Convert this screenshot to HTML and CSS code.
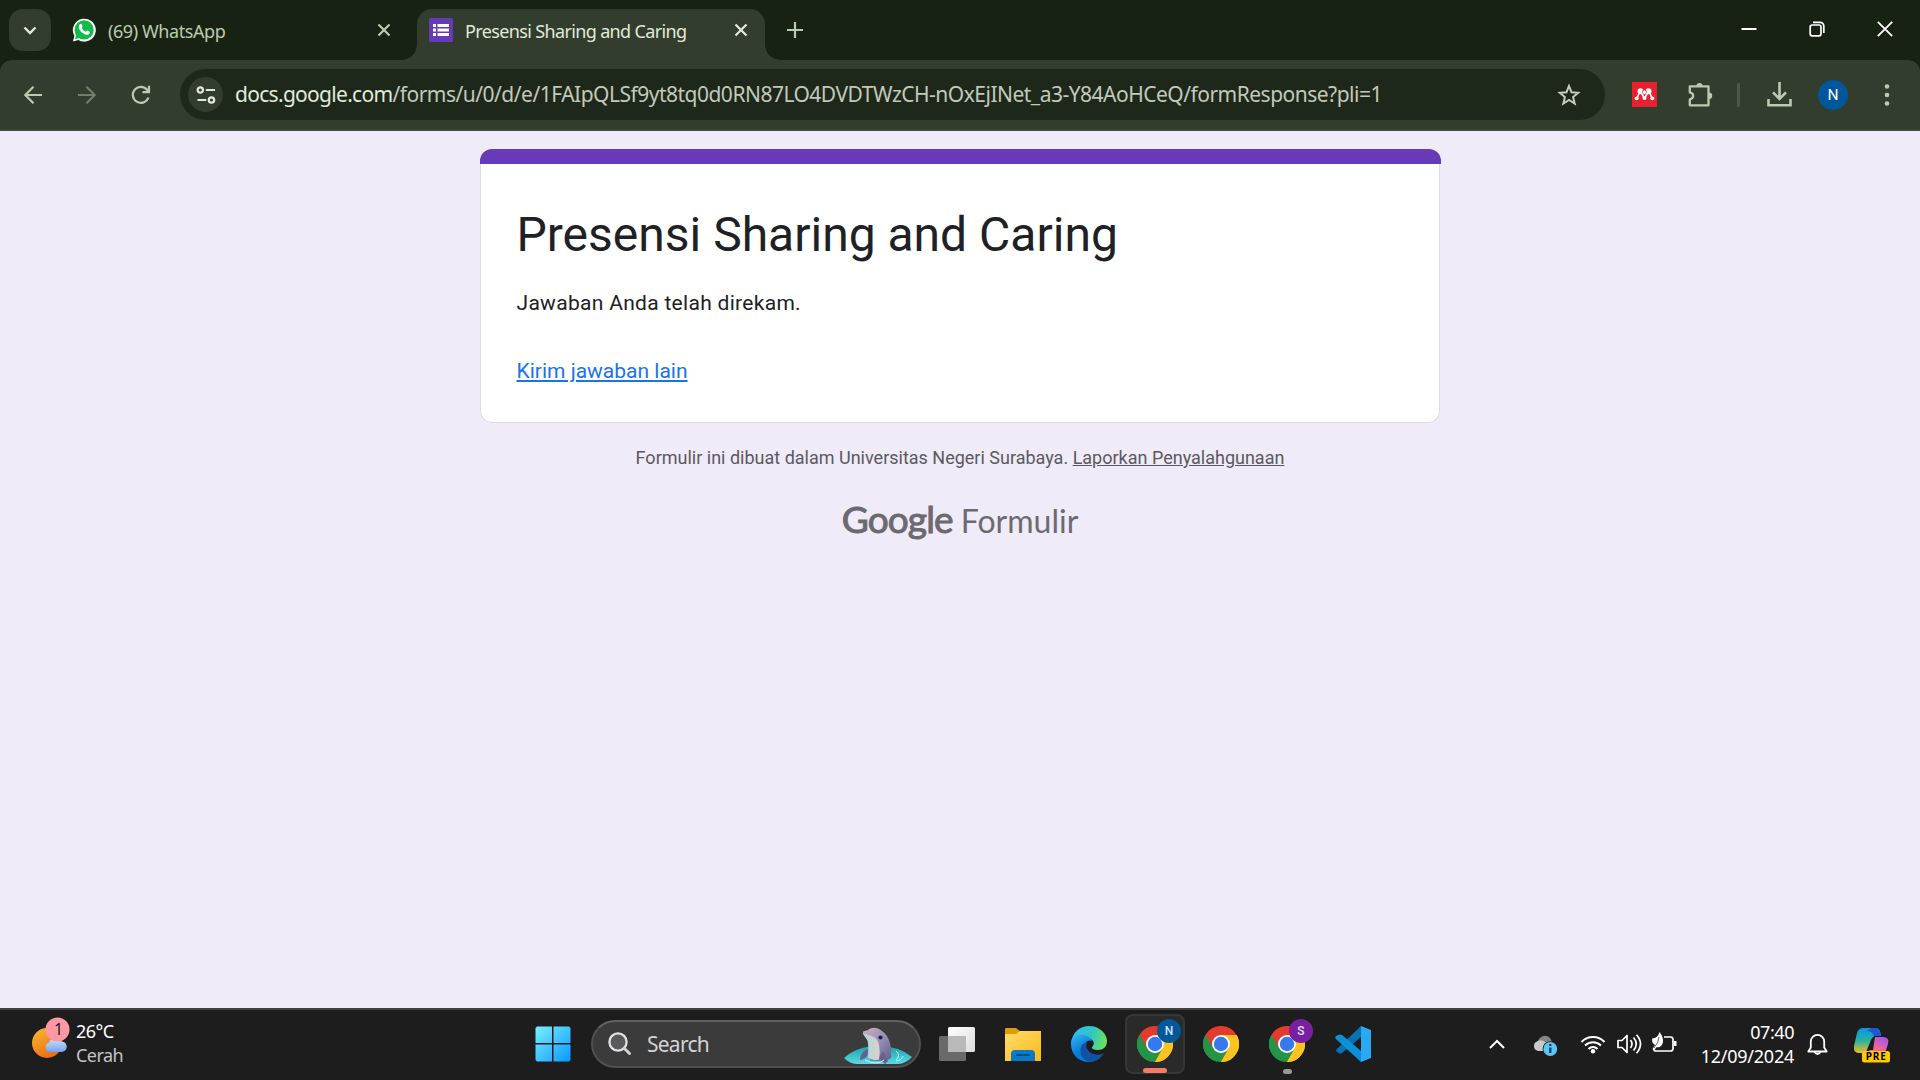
FILE: index.html
```html
<!DOCTYPE html>
<html lang="id">
<head>
<meta charset="utf-8">
<title>Presensi Sharing and Caring</title>
<link rel="stylesheet" href="styles.css">
</head>
<body>
<svg class="defs" width="0" height="0" aria-hidden="true">
  <defs>
    <symbol id="chrome" viewBox="0 0 36 36">
      <path d="M18 18 2.4 9A18 18 0 0 1 33.6 9Z" fill="#e33b2e"/>
      <path d="M18 18 33.6 9A18 18 0 0 1 18 36Z" fill="#fcc31e"/>
      <path d="M18 18 18 36A18 18 0 0 1 2.4 9Z" fill="#249446"/>
      <path d="M18 9H33.6L26 18Z" fill="#fcc31e"/>
      <path d="M10.2 22.5 2.4 9 16 10Z" fill="#e33b2e"/>
      <path d="M10.2 22.5 2.4 9A18 18 0 0 0 14 35.5Z" fill="#249446"/>
      <path d="M25.8 22.5 18 36 16 26Z" fill="#249446"/>
      <path d="M25.8 22.5 18 36A18 18 0 0 0 33.6 9H18Z" fill="#fcc31e"/>
      <circle cx="18" cy="18" r="9" fill="#fff"/>
      <circle cx="18" cy="18" r="7.2" fill="#3779ed"/>
    </symbol>
  </defs>
</svg>
<div class="screen">
  <header class="tabs">
    <button class="tab-search"><svg width="14" height="9" viewBox="0 0 14 9"><path d="M1.5 1.5 7 7l5.500-5.500" fill="none" stroke="#e1ead8" stroke-width="2.400"/></svg></button>
    <div class="tab">
      <svg class="fav" width="24" height="24" viewBox="0 0 24 24"><path d="M1 23.500 2.300 17.800A11.500 11.500 0 1 1 6.400 22Z" fill="#fff"/><circle cx="12.100" cy="11.900" r="9.600" fill="#0fbd4a"/><path d="m3 21.300 1.200-4.500 3.400 3.300Z" fill="#0fbd4a"/><path d="M7.700 6.200c1-.9 1.700-.6 2 .1l.8 1.900c.2.600-.9 1.500-.8 1.800.8 1.700 2.300 3 4 3.800.5.200 1.100-1.300 1.700-1.200l2 1c.9.500.3 2-.5 2.700-1.500 1.200-4.300.3-6.700-1.500-2.500-2-4.600-5.300-2.500-8.600Z" fill="#fff"/></svg>
      <span class="tab-title whatsapp-title">(69) WhatsApp</span>
      <svg class="x" width="14" height="14" viewBox="0 0 14 14"><path d="m1.500 1.500 11 11m0-11-11 11" stroke="#b9ccaf" stroke-width="2.200"/></svg>
    </div>
    <div class="tab active">
      <svg class="fav" width="24" height="24" viewBox="0 0 24 24"><rect width="24" height="24" rx="1.500" fill="#673ab7"/><path d="M4 6h3v3H4zm4.500 0H20v3H8.500zM4 10.500h3v3H4zm4.500 0H20v3H8.500zM4 15h3v3H4zm4.500 0H20v3H8.500z" fill="#fff"/></svg>
      <span class="tab-title presensi-title">Presensi Sharing and Caring</span>
      <svg class="x" width="14" height="14" viewBox="0 0 14 14"><path d="m1.500 1.500 11 11m0-11-11 11" stroke="#e1ead8" stroke-width="2.200"/></svg>
    </div>
    <svg class="plus" width="16" height="16" viewBox="0 0 16 16"><path d="M8 0v16M0 8h16" stroke="#b9ccaf" stroke-width="2.200"/></svg>
    <div class="window-controls">
      <svg width="16" height="16" viewBox="0 0 16 16"><path d="M.5 8h15" stroke="#fff" stroke-width="2"/></svg>
      <svg width="16" height="16" viewBox="0 0 16 16" fill="none" stroke="#fff" stroke-width="1.700"><rect x="1.200" y="4" width="10.800" height="10.800" rx="2"/><path d="M4 1.300h7a3.800 3.800 0 0 1 3.800 3.800V12"/></svg>
      <svg width="16" height="16" viewBox="0 0 16 16"><path d="m.8.800 14.400 14.400m0-14.400L.8 15.200" stroke="#fff" stroke-width="1.800"/></svg>
    </div>
  </header>

  <nav class="toolbar">
    <div class="nav-icons">
      <svg width="20" height="20" viewBox="0 0 20 20" fill="none" stroke="#b9ccaf" stroke-width="2.200"><path d="M19 10H2.500M10.500 1.800 2.300 10l8.200 8.200"/></svg>
      <svg width="20" height="20" viewBox="0 0 20 20" fill="none" stroke="#737e6b" stroke-width="2.200"><path d="M1 10h16.500M9.500 1.800 17.700 10l-8.200 8.200"/></svg>
      <svg width="20" height="20" viewBox="0 0 20 20" fill="none" stroke="#b9ccaf" stroke-width="2.200"><path d="M17.400 12.500A8 8 0 1 1 16.500 5.300L18 7M18 .8v6.400h-6.500"/></svg>
    </div>
    <div class="omnibox">
      <span class="site-chip"><svg width="20" height="18" viewBox="0 0 20 18" fill="none" stroke="#e1ead8" stroke-width="2.200"><circle cx="4.300" cy="4" r="2.700"/><path d="M9.800 4H19M1.500 14h8.800"/><circle cx="15.500" cy="14" r="2.700"/></svg></span>
      <span class="url"><b>docs.google.com</b>/forms/u/0/d/e/1FAIpQLSf9yt8tq0d0RN87LO4DVDTWzCH-nOxEjINet_a3-Y84AoHCeQ/formResponse?pli=1</span>
      <svg class="star" width="24" height="24" viewBox="0 0 24 24"><path d="m12 3 2.500 6.200 6.700.5-5.100 4.300 1.600 6.600-5.700-3.600-5.700 3.600L7.900 14 2.800 9.700l6.700-.5Z" fill="none" stroke="#c5cabe" stroke-width="2"/></svg>
    </div>
    <div class="extensions">
      <svg width="25" height="25" viewBox="0 0 25 25"><path d="M0 0h25v25H0z" fill="#e9202e"/><g fill="#fff"><circle cx="8.500" cy="9.300" r="3"/><circle cx="16.500" cy="9.300" r="3"/><circle cx="4.700" cy="16.300" r="1.900"/><circle cx="12.500" cy="16" r="2"/><circle cx="20.300" cy="16.300" r="1.900"/></g><circle cx="12.500" cy="10.300" r="2.200" fill="#fff" stroke="#e9202e" stroke-width=".8"/><path d="M4.700 16c1.700-1 1-4 3.300-5.500M20.300 16c-1.700-1-1-4-3.300-5.500M9.500 11l2.200 4M15.500 11l-2.200 4" fill="none" stroke="#fff" stroke-width="1.600"/></svg>
      <svg width="25" height="25" viewBox="0 0 25 25" fill="none" stroke="#b9ccaf" stroke-width="2.300" stroke-linejoin="round"><path d="M1.800 4.300h18.700v19H1.800v-6c4.500-1 4.500-6 0-7Z"/><path d="M8.500 4a3 3 0 0 1 6 0ZM21 10.500a3.200 3.200 0 0 1 0 6.400Z" fill="#b9ccaf" stroke="none"/></svg>
      <i class="divider"></i>
      <svg width="25" height="25" viewBox="0 0 25 25" fill="none" stroke="#b9ccaf" stroke-width="2.600"><path d="M12.500 0v16M6 10.300l6.500 6.500 6.500-6.500M1.500 17v6.200h22V17"/></svg>
      <span class="avatar">N</span>
      <svg width="6" height="24" viewBox="0 0 6 24" fill="#b9ccaf"><circle cx="3" cy="3.500" r="2.300"/><circle cx="3" cy="12" r="2.300"/><circle cx="3" cy="20.500" r="2.300"/></svg>
    </div>
  </nav>

  <main class="page">
    <section class="card">
      <div class="card-bar"></div>
      <div class="card-body">
        <h1>Presensi Sharing and Caring</h1>
        <p>Jawaban Anda telah direkam.</p>
        <a>Kirim jawaban lain</a>
      </div>
    </section>
    <p class="disclaimer">Formulir ini dibuat dalam Universitas Negeri Surabaya. <u>Laporkan Penyalahgunaan</u></p>
    <div class="brand"><span class="google">Google</span><span class="formulir">Formulir</span></div>
  </main>

  <footer class="taskbar">
    <div class="weather">
      <svg width="40" height="42" viewBox="0 0 40 42"><defs><linearGradient id="sun" x1="0" y1="0" x2=".6" y2="1"><stop stop-color="#f4be35"/><stop offset="1" stop-color="#f06a12"/></linearGradient><linearGradient id="cloud" x2="0" y2="1"><stop stop-color="#cfe1fb"/><stop offset="1" stop-color="#72a3ee"/></linearGradient></defs><circle cx="15" cy="26" r="15" fill="url(#sun)"/><path d="M17 35a5 5 0 0 1 0-9.500 6.500 6.500 0 0 1 11.500-1A5.300 5.300 0 1 1 29 35Z" fill="url(#cloud)"/><circle cx="25.500" cy="12.500" r="12" fill="#ff98a2"/><text x="22" y="18" font-size="16" fill="#222">1</text></svg>
      <div class="forecast"><span>26°C</span><span class="dim">Cerah</span></div>
    </div>

    <div class="apps">
      <span class="app"><svg width="36" height="36" viewBox="0 0 36 36"><defs><linearGradient id="win" x2="1" y2="1"><stop stop-color="#79efff"/><stop offset="1" stop-color="#0898ff"/></linearGradient></defs><path d="M2 .5h15V17H.5V2ZM18.500.5H34L35.500 2v15h-17ZM.5 18.500H17v17H2L.5 34Zm18 0h17V34L34 35.500H18.500Z" fill="url(#win)"/></svg></span>
      <div class="search">
        <svg width="24" height="24" viewBox="0 0 24 24"><circle cx="10" cy="10" r="8.600" fill="#5a5a5c" stroke="#e2e2e4" stroke-width="2.300"/><path d="m16.200 16.200 5.300 5.300" stroke="#d2d2d8" stroke-width="3" stroke-linecap="round"/></svg>
        <span>Search</span>
        <svg class="dolphin" width="70" height="38" viewBox="0 0 70 38"><defs><linearGradient id="water" x2="0" y2="1"><stop stop-color="#209daa"/><stop offset="1" stop-color="#57dce6"/></linearGradient><linearGradient id="skin" x2="1" y2="1"><stop stop-color="#d5aeb8"/><stop offset=".5" stop-color="#9390ba"/><stop offset="1" stop-color="#675e86"/></linearGradient><linearGradient id="belly" x2="1"><stop stop-color="#a5d5e5"/><stop offset="1" stop-color="#ddd4c8"/></linearGradient></defs><path d="M1 31Q14 19 35 19T69 30Q63 36.500 55 37H14Q6 36.500 1 31Z" fill="url(#water)"/><path d="M20 4.500 25 3C29 0 34 0 39 4c7 5 10 14 9 27l-5 3H27l-2-20-5-7Z" fill="url(#skin)"/><path d="m20 6.500 7 2c4 1 6 3 8 6 2 6 2 12 1 18-4 1-8 0-11-2 0-6 1-10-.5-17Z" fill="url(#belly)"/><path d="M25 22c-5 2-8 6-8 11 4-.5 8-3 8-7ZM40 24l5 10-3 3-6-6Z" fill="#68618b"/><circle cx="37.500" cy="10.500" r="2.100" fill="#202039"/><path d="M22 33q12 6 19 0M53 24q5 4 0 9M60 29q-1 4-7 5" fill="none" stroke="#b4fbff" stroke-width="1"/></svg>
      </div>
      <span class="app"><svg width="36" height="36" viewBox="0 0 36 36"><defs><linearGradient id="pane" x2="1" y2="1"><stop stop-color="#fff"/><stop offset="1" stop-color="#dcdcdc"/></linearGradient></defs><rect x="9" y="1" width="27" height="25" rx="1.500" fill="url(#pane)"/><rect x="0" y="10" width="27" height="25" rx="1.500" fill="#6a6a6a"/><path d="M9 10h18v16H9z" fill="#b9b9b9"/></svg></span>
      <span class="app"><svg width="36" height="36" viewBox="0 0 36 36"><defs><linearGradient id="folder" x2="1" y2="1"><stop stop-color="#ffdc70"/><stop offset="1" stop-color="#fbb914"/></linearGradient></defs><path d="M0 3q0-1 1-1h10l5 4v8H0Z" fill="#df9d05"/><path d="M0 8h11l4-3h21v30H0Z" fill="url(#folder)"/><path d="M6 35V28q0-4 4-4h16q4 0 4 4v7Z" fill="#087ac8"/><path d="M11 29h14" stroke="#064a83" stroke-width="1.800"/></svg></span>
      <span class="app"><svg width="36" height="36" viewBox="0 0 36 36"><defs><linearGradient id="edgeTop" x1="0" y1=".3" x2="1" y2=".5"><stop stop-color="#36b8f4"/><stop offset=".55" stop-color="#2fc6c7"/><stop offset="1" stop-color="#6ae35a"/></linearGradient><linearGradient id="edgeLeft" x2=".6" y2="1"><stop stop-color="#36b8f0"/><stop offset=".6" stop-color="#087ad6"/></linearGradient></defs><path d="M0 18C1 6 9 0 18 0c11 0 18 8 18 15 0 6-4 9-9 9-4 0-7-1-6-3 4-4 1-8-4-9Z" fill="url(#edgeTop)"/><path d="M0 18C0 11 6 8 12 9c6 1 9 4 9 7-5-3-8 1-7 6 2 8 8 11 13 9-3 3-6 5-9 5C7 36 0 28 0 18Z" fill="url(#edgeLeft)"/><path d="M11.500 18C7 25 10 35 20 36c6-.5 10-4 13-9-5 3-13 2-17-4-1-3-.5-5 1-7Z" fill="#1052a3"/><path d="M18 14.500c4 0 5 3 3 6-1 3 2 4 6 4l6 1.500c-5 3-13 2-16-2.500-2-3-2-7 1-9Z" fill="#1d1d1d"/></svg></span>
      <span class="app current"><svg width="36" height="36"><use href="#chrome"/></svg><b class="badge blue">N</b></span>
      <span class="app"><svg width="36" height="36"><use href="#chrome"/></svg></span>
      <span class="app running"><svg width="36" height="36"><use href="#chrome"/></svg><b class="badge purple">S</b></span>
      <span class="app"><svg width="36" height="36" viewBox="0 0 36 36"><path d="m26 0-23 22q-3 2-1 4l2 1q1 1 3 0L26 11Z" fill="#0872b4"/><path d="m26 36-24-22q-3-2-1-4l2-1q2-1 4 0l19 16Z" fill="#0b90d9"/><path d="m26 0 10 4v28l-10 4Z" fill="#2aaaf5"/></svg></span>
    </div>

    <div class="tray">
      <svg width="16" height="10" viewBox="0 0 16 10"><path d="m1 9 7-7 7 7" fill="none" stroke="#fff" stroke-width="2"/></svg>
      <svg class="onedrive" width="25" height="22" viewBox="0 0 25 22"><path d="M5 7a7 7 0 0 1 12-4l3 6-8 4Z" fill="#858585"/><path d="M5 16A5 5 0 0 1 4 6.500 7 7 0 0 1 12 7l5 4-4 5Z" fill="#c9c9c9"/><circle cx="17.300" cy="14" r="7.700" fill="#1d1d1d"/><circle cx="17.300" cy="14" r="6.900" fill="#5ac6f8"/><path d="M17.300 12.500V18M17.300 9v2" stroke="#12384d" stroke-width="2.200"/></svg>
      <svg class="wifi" width="26" height="20" viewBox="0 0 26 20"><path d="M1.500 8a16 16 0 0 1 23 0M5 11.500a11.300 11.300 0 0 1 16 0M8.500 15a6.300 6.300 0 0 1 9 0" fill="none" stroke="#fff" stroke-width="2"/><circle cx="13" cy="17.200" r="2.200" fill="#fff"/></svg>
      <svg class="sound" width="25" height="22" viewBox="0 0 25 22"><path d="M1 7.500h4l5-5v17l-5-5H1ZM13.500 7q3 4 0 8M16.500 4.500q5.500 6.500 0 13M19.500 1.800q8 9 0 18.400" fill="none" stroke="#fff" stroke-width="1.700" stroke-linejoin="round"/></svg>
      <svg class="battery" width="25" height="22" viewBox="0 0 25 22"><path d="M12 5h6.500q2.500 0 2.500 2.500v9q0 2.500-2.500 2.500H4q-2 0-2-1.500" fill="none" stroke="#fff" stroke-width="1.700"/><path d="M22 9h2.500v5H22ZM.2 6.500Q6 6 7.500 0 11 4 11 9c0 5-4 7-6.500 6.200L2 18.500.5 17 3 13C0 11 0 9 .2 6.500Z" fill="#fff"/><path d="M7 5q0 5-5 11" fill="none" stroke="#1d1d1d" stroke-width=".7"/></svg>
      <div class="clock"><span>07:40</span><span class="date">12/09/2024</span></div>
      <svg class="bell" width="21" height="23" viewBox="0 0 21 23" fill="none" stroke="#fff" stroke-width="1.800" stroke-linejoin="round"><path d="M3.800 8.500a6.700 6.700 0 0 1 13.400 0v6l2.500 4H1.300l2.500-4Z"/><path d="M7.500 19q3 4 6 0"/></svg>
      <svg class="copilot" width="36" height="36" viewBox="0 0 36 36"><defs><linearGradient id="coA" x2="0" y2="1"><stop stop-color="#0b94e8"/><stop offset=".5" stop-color="#28b2a0"/><stop offset="1" stop-color="#f2bd20"/></linearGradient><linearGradient id="coB" x1="1" x2=".2" y2="1"><stop stop-color="#9653f3"/><stop offset=".6" stop-color="#ee65a0"/><stop offset="1" stop-color="#ff744d"/></linearGradient></defs><path d="M8 1h14q4 0 5 8h-7L14 23q-1 3-5 3H4q-5-1-4-7L3 6q1-4 5-5Z" fill="url(#coA)"/><path d="M17 1h5q3 0 5 8h-7q-2-5-7-5Z" fill="#1c57d4"/><path d="M21 10h9q6 1 4 7l-3 9H7q6 0 7-3h5Z" fill="url(#coB)"/><path d="m20 10-5 15h-3l5-12q1-3 3-3Z" fill="#1d1d1d"/><rect x="8" y="24" width="28" height="11.500" rx="2.500" fill="#ffcb00"/><text x="11.800" y="33.200" font-size="10" font-weight="700" textLength="20">PRE</text></svg>
    </div>
  </footer>
</div>
</body>
</html>
```

FILE: styles.css
```css
* { box-sizing: border-box; }
body { margin: 0; font-family: "Noto Sans", sans-serif; }
svg { display: block; flex: none; }
.defs { position: absolute; }
.screen { width: 1920px; height: 1080px; display: flex; flex-direction: column; overflow: hidden; background: #182213; }

/* Browser tabs */
.tabs { height: 60px; display: flex; align-items: flex-start; padding: 9px 27px 0 9px; }
.tab-search { width: 42px; height: 42px; border: 0; padding: 0; border-radius: 14px; background: #323d2d; display: grid; place-items: center; }
.tab { width: 348px; height: 51px; margin-left: 9px; padding: 0 17px 9px 12px; display: flex; align-items: center; color: #b9ccaf; }
.tab .x { margin-left: auto; }
.tab-title { margin-left: 12px; font-size: 18px; line-height: 24px; white-space: nowrap; padding-top: 1px; }
.whatsapp-title { letter-spacing: -.42px; }
.presensi-title { letter-spacing: -.64px; }
.tab.active { position: relative; background: #323d2d; border-radius: 15px 15px 0 0; color: #e1ead8; }
.tab.active::before, .tab.active::after { content: ""; position: absolute; bottom: 0; width: 15px; height: 15px; }
.tab.active::before { left: -15px; background: radial-gradient(circle at 0 0, transparent 14.5px, #323d2d 15px); }
.tab.active::after { right: -15px; background: radial-gradient(circle at 100% 0, transparent 14.5px, #323d2d 15px); }
.plus { margin: 13px 0 0 22px; }
.window-controls { margin: 12px 0 0 auto; display: flex; gap: 52px; }

/* Address bar */
.toolbar { height: 71px; background: #323d2d; border-bottom: 2px solid #43473f; display: flex; align-items: center; padding: 0 30px 0 23px; border-radius: 12px 12px 0 0; }
.nav-icons { display: flex; gap: 34px; width: 157px; }
.omnibox { width: 1425px; height: 51px; border-radius: 26px; background: #1e281a; display: flex; align-items: center; padding: 0 24px 0 8px; }
.site-chip { width: 35px; height: 35px; border-radius: 50%; background: #323d2d; display: grid; place-items: center; }
.url { margin-left: 12px; padding-bottom: 1px; font-size: 21px; line-height: 30px; color: #c2c9bb; white-space: nowrap; letter-spacing: -.51px; }
.url b { font-weight: 400; color: #e1ead8; letter-spacing: -.7px; }
.star { margin-left: auto; }
.extensions { display: flex; align-items: center; flex: 1; padding-left: 27px; }
.extensions > :nth-child(2) { margin-left: 31px; }
.divider { width: 3px; height: 24px; border-radius: 2px; background: #4c5a45; margin: 0 27px 0 24px; }
.avatar { width: 30px; height: 30px; border-radius: 50%; background: #01579b; color: #fff; font: 15.500px/31px Roboto, sans-serif; text-align: center; margin: 0 36px 0 26px; }

/* Form confirmation */
.page { flex: 1; background: #f0ebf8; display: flex; flex-direction: column; align-items: center; padding-top: 18px; font-family: Roboto, sans-serif; }
.card { width: 961px; height: 274px; border-radius: 12px; overflow: hidden; display: flex; flex-direction: column; }
.card-bar { height: 15px; flex: none; background: #673ab7; }
.card-body { flex: 1; width: 960px; padding: 41px 36px 0; background: #fff; border: 1px solid #dadce0; border-top: 0; border-radius: 0 0 12px 12px; }
.card h1 { margin: 0; font-size: 48px; line-height: 60px; font-weight: 400; color: #202124; white-space: nowrap; }
.card p { margin: 23px 0 0; font-size: 21px; line-height: 30px; letter-spacing: .3px; color: #202124; }
.card a { display: block; margin-top: 38px; font-size: 21px; line-height: 30px; color: #1a73e8; text-decoration: underline; }
.disclaimer { margin: 22px 0 0; font-size: 18px; line-height: 25px; color: #5b5960; white-space: nowrap; }
.brand { height: 48px; margin-top: 25px; display: flex; gap: 8px; align-items: baseline; color: #6c6a70; font-family: Lato, sans-serif; line-height: 48px; }
.google { font-size: 37px; -webkit-text-stroke: 1px #6c6a70; letter-spacing: -.85px; }
.formulir { font-size: 32px; letter-spacing: 0; }

/* Taskbar */
.taskbar { height: 72px; background: #1d1d1d; border-top: 2px solid #414144; color: #fff; display: flex; align-items: center; font-size: 18px; padding-bottom: 2px; }
.weather { width: 520px; height: 68px; padding: 7px 0 0 32px; display: flex; }
.forecast { margin-left: 4px; padding-top: 2px; display: flex; flex-direction: column; line-height: 24px; letter-spacing: -.55px; }
.dim { color: #c4c4c4; }
.apps { width: 867px; display: flex; align-items: center; }
.app { width: 60px; height: 60px; margin: 0 3px; display: grid; place-items: center; position: relative; border-radius: 8px; }
.search { width: 330px; height: 48px; margin: 0 2px 0 5px; border: 2px solid #505050; border-top-color: #626262; border-radius: 24px; background: #3b3b3b; display: flex; align-items: center; padding-left: 15px; font-size: 21px; letter-spacing: -.75px; color: #d4d4d4; overflow: hidden; }
.search + .app { margin-left: 4px; }
.search span { margin-left: 15px; }
.dolphin { margin: 4px 6px 0 auto; }
.current { background: #2a2a2a; border: 2px solid #363636; }
.current::after, .running::after { content: ""; position: absolute; bottom: 0; height: 5px; border-radius: 3px; }
.current::after { width: 24px; left: 16px; bottom: -1px; background: #f47c62; }
.running::after { width: 9px; left: 26px; background: #999; }
.badge { position: absolute; left: 32px; top: 5px; width: 24px; height: 24px; border-radius: 50%; font: 500 12px/24px Roboto, sans-serif; text-align: center; color: #d7e4ef; }
.current .badge { left: 30px; top: 3px; }
.badge::before { content: ""; position: absolute; z-index: -1; width: 20px; height: 20px; border-radius: 50%; left: -3px; top: 5px; background: inherit; filter: brightness(.85); }
.blue { background: #03589c; }
.purple { background: #7b1fa2; }
.tray { flex: 1; display: flex; align-items: center; padding-left: 102px; }
.onedrive { margin: 3px 0 0 28px; }
.wifi { margin-left: 22px; }
.sound { margin-left: 11px; }
.battery { margin: -3px 0 0 10px; }
.clock { width: 117px; display: flex; flex-direction: column; align-items: flex-end; line-height: 24px; letter-spacing: -.45px; }
.date { letter-spacing: -.25px; }
.bell { margin-left: 13px; }
.copilot { margin: 1px 0 0 26px; }
```
